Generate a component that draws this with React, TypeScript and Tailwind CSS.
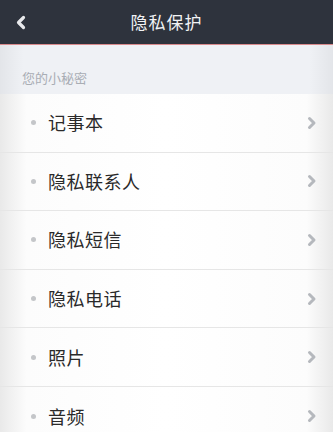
import React from 'react';

const items = ['记事本', '隐私联系人', '隐私短信', '隐私电话', '照片', '音频'];

const font = { fontFamily: '"Noto Sans CJK SC", "Noto Sans", sans-serif' };

export default function App() {
  return (
    <div className="w-[333px] h-[432px] overflow-hidden bg-white" style={font}>
      {/* Header */}
      <div className="h-[45px] bg-[#2e333d] flex items-center relative border-b border-[#d98a8c]">
        <svg className="absolute left-[15px] top-[15px]" width="11" height="15" viewBox="0 0 11 15">
          <path d="M8.5 2.5 L3.5 7.5 L8.5 12.5" stroke="#e8e9ec" strokeWidth="3.2" fill="none" strokeLinecap="round" strokeLinejoin="round" />
        </svg>
        <div className="flex-1 text-center text-[#f2f3f5] text-[17px] tracking-[1px]">隐私保护</div>
      </div>

      {/* Section header */}
      <div className="h-[49px] bg-[linear-gradient(to_right,#e3e5e9,#eff1f5_7%,#eff1f5_93%,#e3e5e9)] flex items-end pb-[7px] px-[22px]">
        <span className="text-[13px] text-[#a9adb4]">您的小秘密</span>
      </div>

      {/* List */}
      <div className="flex flex-col">
        {items.map((t, i) => (
          <div
            key={t}
            className={`h-[58.6px] flex items-center pl-[31px] pr-[16px] bg-[linear-gradient(to_right,#e9e9e9,#fcfcfc_8%,#ffffff_50%,#fcfcfc_92%,#e9e9e9)] ${
              i < items.length - 1 ? 'border-b border-[#e6e6e6]' : ''
            }`}
          >
            <span className="w-[5px] h-[5px] rounded-full bg-[#c4c6c9]" />
            <span className="ml-[12px] flex-1 text-[18px] text-[#2a2a2a] tracking-[0.5px]">{t}</span>
            <svg width="10" height="14" viewBox="0 0 10 14">
              <path d="M2.5 2.5 L7 7 L2.5 11.5" stroke="#b5b8bd" strokeWidth="3" fill="none" strokeLinecap="round" strokeLinejoin="round" />
            </svg>
          </div>
        ))}
      </div>
    </div>
  );
}
